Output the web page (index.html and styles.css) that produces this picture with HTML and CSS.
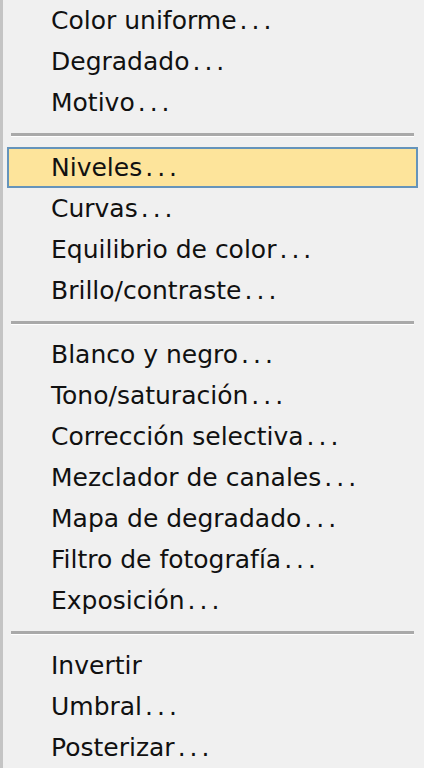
FILE: index.html
```html
<!DOCTYPE html>
<html lang="es">
<head>
    <meta charset="UTF-8">
    <title>Ajustes</title>
    <link rel="stylesheet" href="styles.css">
</head>
<body>

    <div class="menu">
        <div class="item">Color uniforme<span class="dots">...</span></div>
        <div class="item">Degradado<span class="dots">...</span></div>
        <div class="item">Motivo<span class="dots">...</span></div>
        <div class="separator"></div>
        <div class="item active">Niveles<span class="dots">...</span></div>
        <div class="item">Curvas<span class="dots">...</span></div>
        <div class="item">Equilibrio de color<span class="dots">...</span></div>
        <div class="item">Brillo/contraste<span class="dots">...</span></div>
        <div class="separator"></div>
        <div class="item">Blanco y negro<span class="dots">...</span></div>
        <div class="item">Tono/saturación<span class="dots">...</span></div>
        <div class="item">Corrección selectiva<span class="dots">...</span></div>
        <div class="item">Mezclador de canales<span class="dots">...</span></div>
        <div class="item">Mapa de degradado<span class="dots">...</span></div>
        <div class="item">Filtro de fotografía<span class="dots">...</span></div>
        <div class="item">Exposición<span class="dots">...</span></div>
        <div class="separator"></div>
        <div class="item">Invertir</div>
        <div class="item">Umbral<span class="dots">...</span></div>
        <div class="item">Posterizar<span class="dots">...</span></div>
    </div>

</body>
</html>
```

FILE: styles.css
```css
* {
    box-sizing: border-box;
}

body {
    margin: 0;
    background: #ffffff;
    font-family: 'DejaVu Sans', Verdana, sans-serif;
}

.menu {
    width: 424px;
    height: 768px;
    background: #f0f0f0;
    border-left: 3px solid #c4c4c4;
    padding: 0 6px 0 4px;
    display: flex;
    flex-direction: column;
}

.item {
    height: 41px;
    line-height: 38px;
    padding-left: 42px;
    font-size: 25px;
    color: #111111;
    border: 2px solid transparent;
    white-space: nowrap;
}

.item .dots {
    letter-spacing: 4px;
    margin-left: 3px;
}

.item.active {
    background: #fde49b;
    border-color: #6594bb;
}

.separator {
    height: 24px;
    display: flex;
    align-items: center;
    padding: 0 4px;
}

.separator::before {
    content: "";
    flex: 1;
    height: 3px;
    background: #a9a9a9;
    border-bottom: 1px solid #ffffff;
}
```
